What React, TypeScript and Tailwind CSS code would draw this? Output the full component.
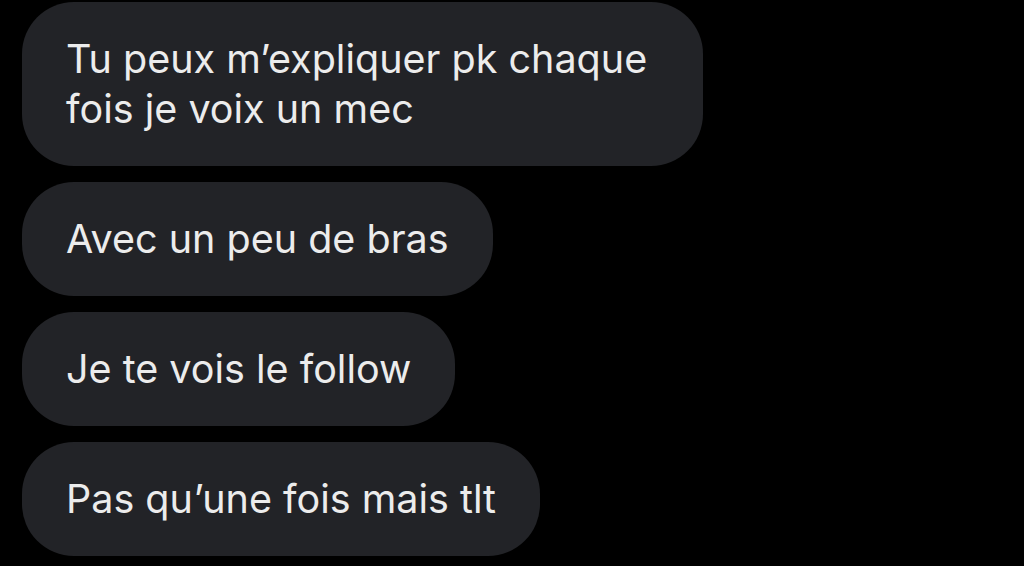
const messages = [
  "Tu peux m’expliquer pk chaque fois je voix un mec",
  "Avec un peu de bras",
  "Je te vois le follow",
  "Pas qu’une fois mais tlt",
];

export default function App() {
  return (
    <div className="min-h-[566px] w-[1024px] bg-black pt-[2px] pl-[22px] font-['Inter',sans-serif]">
      <div className="flex flex-col items-start gap-4">
        {messages.map((text) => (
          <div
            key={text}
            className="max-w-[681px] rounded-[52px] bg-[#222327] px-11 py-8 text-[39.5px] leading-[50px] text-[#ececec]"
          >
            {text}
          </div>
        ))}
      </div>
    </div>
  );
}
